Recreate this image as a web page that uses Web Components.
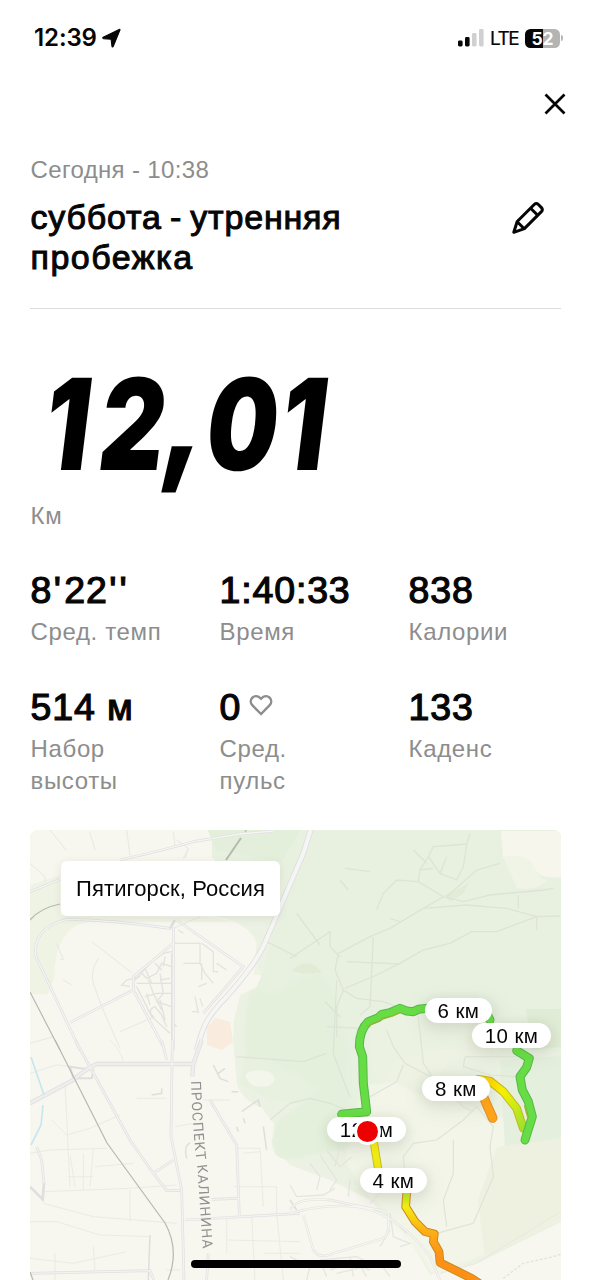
<!DOCTYPE html>
<html lang="ru">
<head>
<meta charset="utf-8">
<title>Пробежка</title>
<style>
html,body{margin:0;padding:0;background:#fff}
body{width:591px;height:1280px;overflow:hidden;font-family:"Liberation Sans",Arial,sans-serif;color:#060606}
</style>
</head>
<body>
<run-app></run-app>
<script>
const define = (name, html, setup) => customElements.define(name, class extends HTMLElement {
  constructor() {
    super();
    const t = document.createElement('template');
    t.innerHTML = html;
    this.attachShadow({mode: 'open'}).appendChild(t.content.cloneNode(true));
  }
  connectedCallback() { if (setup) setup(this, this.shadowRoot); }
});

define('status-bar', `
<style>
:host{display:flex;height:76px;box-sizing:border-box;padding:0 28px 0 34px;align-items:center;justify-content:space-between;font-family:Inter,sans-serif}
.l,.r{display:flex;align-items:center}
.time{font-size:24px;font-weight:600;letter-spacing:-.1px;line-height:30px}
.l svg{margin-left:5.5px;overflow:visible}
.lte{font-size:19px;letter-spacing:-1.5px;margin:1px 0 0 6px;width:35px;line-height:24px;-webkit-text-stroke:.2px #060606}
.bat{width:35px;height:19px;border-radius:5.5px;background:linear-gradient(90deg,#060606 51%,#b4b4b4 51%);color:#fff;font:700 17.5px/19.5px Inter,sans-serif;text-align:center;letter-spacing:-.2px}
.nub{width:2px;height:6px;border-radius:0 2px 2px 0;background:#b8b8b8;margin-left:1px}
</style>
<div class="l"><span class="time">12:39</span>
<svg width="19" height="19" viewBox="0 0 19 19"><path d="M18 .9 11.2 17.5Q10.6 18.6 10 17.4L9.1 10.2 1.4 9.6Q.1 9.1 1.2 8.3L17.2 .5Q18.3 .1 18 .9Z" fill="#060606" stroke="#060606" stroke-width="1.1" stroke-linejoin="round"/></svg></div>
<div class="r"><svg width="27" height="18" viewBox="0 0 27 18"><rect x="1" y="11.5" width="4.6" height="6" rx="1.4" fill="#060606"/><rect x="8" y="8" width="4.6" height="9.5" rx="1.4" fill="#060606"/><rect x="15" y="4" width="4.6" height="13.5" rx="1.4" fill="#d0d0d0"/><rect x="22" y="0" width="4.6" height="17.5" rx="1.4" fill="#d0d0d0"/></svg>
<span class="lte">LTE</span><span class="bat">52</span><span class="nub"></span></div>`);

define('close-button', `
<style>:host{display:flex;justify-content:flex-end;padding:17px 25px 0 0;height:59px;box-sizing:border-box}</style>
<svg width="22" height="22" viewBox="0 0 22 22"><path d="M1.5 1.5 20.5 20.5M20.5 1.5 1.5 20.5" stroke="#060606" stroke-width="2.7" fill="none"/></svg>`);

define('run-header', `
<style>
:host{display:block;margin:0 30px;height:174px;box-sizing:border-box;border-bottom:1px solid #dcdcdc;padding-top:21px}
.date{font-size:24px;line-height:28px;color:#8d8d8d;letter-spacing:.35px;padding-left:.5px}
.row{display:flex;justify-content:space-between;margin-top:14px}
h1{font-size:34px;line-height:40.4px;font-weight:400;margin:-1px 0 0;width:400px;letter-spacing:.8px;word-spacing:-2px;-webkit-text-stroke:1px #060606;padding-left:.5px}
svg{margin:3px 16px 0 0}
</style>
<div class="date"><slot name="date"></slot></div>
<div class="row"><h1><slot></slot></h1>
<svg width="34" height="34" viewBox="0 0 34 34" fill="none" stroke="#060606" stroke-width="3" stroke-linejoin="round"><path d="M2.8 31.3 6.2 20.5 23.2 3.5Q25.3 1.6 27.4 3.5L30.4 6.6Q32.2 8.7 30.4 10.6L13.4 27.6Z"/><path d="M19.6 7.2 26.7 14.3M6.2 20.7 13.2 27.7"/></svg></div>`);

define('distance-hero', `
<style>
:host{display:block;height:220px;margin:0 30px}
svg{display:block;padding-top:31px;overflow:visible}
.u{font-size:24px;line-height:28px;color:#8d8d8d;margin-top:-8px;letter-spacing:.8px;padding-left:.5px}
text{font-family:Inter,sans-serif;font-weight:900;font-size:127px}
.c{font-size:142px}
</style>
<svg width="340" height="170" viewBox="0 -20 340 170"><text transform="translate(18 110) skewX(-7) scale(.79 1)" x="-10 60 139 195 289" y="0">12<tspan class="c" dy="-7">,</tspan><tspan dy="7">01</tspan></text></svg>
<div class="u">Км</div>`);

define('stat-cell', `
<style>
:host{display:block;width:189px}
.v{font-size:37.5px;line-height:40px;height:40px;letter-spacing:.85px;-webkit-text-stroke:1.2px #060606;display:flex;align-items:center;padding-left:.5px}
.l{font-size:24px;line-height:32.4px;color:#8d8d8d;letter-spacing:.65px;margin-top:5.6px;white-space:pre-line;padding-left:.5px}
</style>
<div class="v"><slot></slot></div><div class="l"></div>`,
 (el, root) => { root.querySelector('.l').textContent = el.getAttribute('label').replace('|', '\n'); });

define('heart-icon', `
<style>:host{display:block;margin:-4px 0 0 7.5px}svg{display:block}</style>
<svg width="24" height="22" viewBox="0 0 24 22"><path d="M12 20 3.3 11.2C-1.4 5.8 5.8-1.8 12 4.8 18.2-1.8 25.4 5.8 20.7 11.2Z" fill="none" stroke="#8d8d8d" stroke-width="2.4"/></svg>`);

define('stat-grid', `
<style>:host{display:grid;grid-template-columns:repeat(3,189px);grid-template-rows:117px 143px;padding:41px 0 0 30px;height:301px;box-sizing:border-box}</style><slot></slot>`);

define('km-pin', `
<style>
:host{position:absolute;height:25px;border-radius:13px;background:#fff;display:block;text-align:center;font-size:20.5px;line-height:25px;letter-spacing:.4px;box-shadow:0 2px 12px rgba(60,60,40,.1)}
</style><slot></slot>`,
 el => { el.style.left = el.getAttribute('x') + 'px'; el.style.top = el.getAttribute('y') + 'px'; el.style.width = el.getAttribute('w') + 'px'; });

define('route-map', `
<style>
:host{display:block;position:relative;margin:0 30px;width:531px;height:450px;border-radius:8px 8px 0 0;overflow:hidden;background:#f7f7ef}
svg.m{display:block}
.place{position:absolute;left:31px;top:31px;width:219px;height:55px;border-radius:6px;background:#fff;box-shadow:0 2px 8px rgba(60,60,40,.1);text-align:center;font-size:22px;line-height:55px;letter-spacing:.1px}
.dot{position:absolute;left:326.5px;top:290.5px;width:21px;height:21px;border-radius:50%;background:#ec0000;box-shadow:0 0 0 3px #fff}
</style>
<svg class="m" width="531" height="450" viewBox="30 830 531 450">
<defs>
<linearGradient id="y1" x1="0" y1="0" x2="1" y2="1"><stop offset="0" stop-color="#ffc400"/><stop offset=".4" stop-color="#f7f000"/><stop offset="1" stop-color="#9be22c"/></linearGradient>
<linearGradient id="y2" gradientUnits="userSpaceOnUse" x1="0" y1="630" x2="0" y2="830"><stop offset="0" stop-color="#a7e32c"/><stop offset=".25" stop-color="#f2ec10"/><stop offset=".6" stop-color="#ffb014"/><stop offset="1" stop-color="#ff9016"/></linearGradient>
<filter id="soft"><feGaussianBlur stdDeviation="1.5"/></filter>
<filter id="wide"><feGaussianBlur stdDeviation="9"/></filter>
</defs>
<rect x="30" y="830" width="531" height="450" fill="#f7f7ef"/>
<path fill="#eff3e4" d="M30 885 60 875V916L180 917 212 917Q250 922 257 944L262 975 254 975 258 922 100 922Q70 920 60 945 54 960 54 978L48 994H30Z"/>
<path fill="#ecf2e3" d="M208 830 214 850 216 917Q250 922 257 944L255 960 264 984 240 995 234 1020 233 1040 237 1085Q243 1101 262 1108L275 1125 272 1145 290 1165 330 1180 370 1200 410 1240 430 1275 480 1262 561 1222V830Z"/>
<path fill="#e8f1e0" d="M212 830H561V1052L500 1050 440 1050 395 1060 375 1105 370 1145 340 1150 300 1157Q284 1163 275 1154L272 1140 280 1118 300 1104 270 1100 240 1085 245 1052 246 1010 264 970 285 880 250 860 212 858Z"/>
<path fill="#e3efdb" d="M208 830H300L282 862 216 850Z"/>
<g filter="url(#soft)"><path fill="#e3efdb" opacity=".75" d="M249 992Q260 985 270 995L320 970 335 995 350 1060 350 1110 340 1148 300 1158Q276 1162 273 1145L274 1125 300 1105 318 1090 280 1065 248 1056 243 1040Z"/>
<path fill="#f4f5e9" opacity=".75" d="M356 1110 365 1085 395 1082 420 1095 480 1108 505 1120 520 1145 561 1138V1218L482 1256 433 1275 420 1255 360 1185 345 1160Z"/>
<path fill="#eef2e4" d="M370 1040 372 1020 410 1007 500 1020 500 1055 450 1060 430 1090 400 1080 372 1080Z" opacity=".55"/></g>
<path fill="#eef1e0" d="M497 1147 561 1135V1218L485 1257 478 1200Z"/>
<path fill="#e1ecd6" d="M526 1009H561V1047L532 1050Z"/><path fill="#e5efde" d="M500 1060 561 1056V1138L505 1146Z"/><path fill="#e0ead2" d="M291 971Q308 955 322 972L305 974ZM445 895Q465 888 470 880L464 893 450 902Z" opacity=".8"/>
<path fill="#f6f6ec" d="M501 831H561V877Q540 880 534 868 528 852 503 858Z"/>
<path fill="#eff4e6" d="M503 857Q528 852 534 868 540 880 548 880 535 892 517 888Z"/>
<path fill="#f3f6eb" d="M245 1075Q252 1068 270 1072 280 1080 268 1086 250 1090 245 1075Z"/>
<path fill="#f9ebde" d="M207 1028 215 1018 230 1022 233 1042 222 1050 207 1045Z"/>
<g fill="#7a8a6a" opacity=".10" filter="url(#wide)"><rect x="420" y="1000" width="80" height="34" rx="15"/><rect x="470" y="1025" width="84" height="34" rx="15"/><rect x="420" y="1078" width="72" height="34" rx="15"/><rect x="330" y="1120" width="78" height="34" rx="15"/><rect x="360" y="1170" width="70" height="34" rx="15"/></g>
<g fill="none" stroke="#e3e3e1" stroke-width="1" opacity=".8">
<g transform="translate(30 820) scale(.33333)" stroke-width="3">
<path d="M60 30 110 92M178 35 196 90M290 30 300 105M430 35 436 85M0 130 45 170V185M475 85 460 115M185 365 305 458M270 635 375 590M0 670 70 650M430 325 510 290 530 260M205 415Q180 455 190 490L215 560 270 685M80 370 100 418 90 420M100 480 125 495M440 60 475 85 465 115"/>
<path stroke="#dedede" stroke-width="4" d="M435 370H510V430H460M515 370 550 395V455H565M510 430 525 460 550 490M515 430V480M495 530 505 580M510 535 518 560M485 575H505M505 500 530 490M560 430 590 450M445 330 460 340M430 610 440 620"/>
<path stroke="#dddddb" stroke-width="4" d="M315 480 360 430 400 400 425 395M320 490H425M320 500 365 590 420 640M425 400V660M335 460 350 475 380 460 395 430 425 440M345 530 380 520H425M355 480 370 520 395 570M390 460 400 520 380 545 425 560M370 590Q350 570 375 560L395 585 410 620M330 470 290 480 275 495 300 500M375 430 395 450M405 410 400 440M345 445 365 490M390 480 420 475M390 540 405 600M360 555 350 520"/>
</g>
<g transform="translate(30 1040) scale(.33333)" stroke-width="2.4">
<path d="M0 100 80 75 130 80M240 0Q270 30 280 62M105 130 120 440M65 240 110 285 180 265 270 225M0 340 60 330 230 325M120 345 135 440M160 340V450M190 330 180 440M115 410H190M195 380 310 370M300 450V545M40 455 300 445 440 435M0 545H80L210 585 360 590M40 490 190 530 440 550M0 655 130 670 290 635M75 640V720M190 620 195 690M410 690H450M435 260 490 250M520 180H600M320 175H410M620 325H690L700 500M640 340 690 335M590 530V640M665 525 675 720M740 520 760 720M590 600 810 605M700 640H810M610 440H740V520"/>
<path stroke="#d8d8d8" stroke-width="4.5" d="M360 585 355 720M365 165 395 160V145M470 355Q460 320 480 308M550 75 570 115 595 125M585 85 565 100M605 155H625M620 260 625 275M640 235 645 250M635 215 685 180 690 200M700 260 710 330M780 480 800 510"/>
</g>
<g transform="translate(290 980) scale(.33333)" stroke-width="4" stroke="#e2e2dc">
<path d="M60 550 90 590 80 630M110 510 150 560 185 530M90 525 140 600 120 630M150 500 135 560M0 615 20 650 100 645 135 625M180 600 175 650M240 670 270 640 345 590M0 830 60 860 50 900M90 840 200 830 260 860M90 840 110 890M140 880 270 850 300 890M180 830 190 890M300 700 310 770 360 790 330 800M310 720 350 760M300 750 270 800M120 870 180 850 240 870M200 840 230 890"/>
</g>
</g>
<g fill="none" stroke="#dbe1d4" stroke-width="1" opacity=".85">
<g transform="translate(290 820) scale(.33333)" stroke-width="4">
<path d="M0 415 120 335V380L150 410 M20 280 90 375M145 400 240 350 300 325 400 265 460 230 520 245 600 225 760 210 790 205M400 265 530 255 650 265 740 290 810 288M740 290V330M685 225V265M250 350 240 560 210 585M165 505 260 465 330 430 400 390 480 370 545 335 620 335 740 290M170 425 330 432M145 400 135 450 160 510 200 535 280 545 320 560M160 510 140 560V650M260 270 280 220 320 180 385 185 460 230M470 230 560 150 630 130M385 185 390 150 415 110 430 80 530 72 540 40M415 110 450 160 500 180 520 140 530 75M450 160 470 110M390 150 430 145M370 90 410 130M150 180 175 210M165 145 240 155M300 295 330 305M105 545 150 590M-80 360 20 410"/>
</g>
<g transform="translate(290 980) scale(.33333)" stroke-width="3.5">
<path d="M290 150 310 200 345 250 430 295 520 380 550 395M385 110 400 250 430 295M340 255 320 305 240 350M345 590 340 530 370 490 440 480 520 420 560 380 610 440 600 500 610 590 550 730 440 760M490 480 490 580 460 660 470 740M-60 420 0 370 60 355 120 370 190 400M-160 230 40 245 110 220 M140 0 130 220 160 300 180 350M110 140 210 145M525 230 520 260 600 285 680 290M525 230 680 230"/>
</g></g>
<g fill="none" stroke="#dedee0" transform="translate(30 820) scale(.33333)">
<g stroke-width="8"><path d="M0 215 90 178M270 120Q400 90 490 65L630 42 730 33"/><path d="M842 30 820 100 700 380Q670 440 590 530 530 590 515 640L500 690" stroke-width="17"/><path d="M430 320V690M430 370 310 470V510L120 608M310 510 400 680M440 300 640 440 520 580M110 298Q250 300 420 325L435 300M110 298Q5 325 18 410L150 690"/></g>
</g>
<g fill="none" stroke="#f5f5f4" transform="translate(30 820) scale(.33333)">
<path d="M842 30 820 100 700 380Q670 440 590 530 530 590 515 640L500 690" stroke-width="12"/><path d="M0 215 90 178M270 120Q400 90 490 65L630 42 730 33M430 320V690M430 370 310 470V510L120 608M310 510 400 680M440 300 640 440 520 580M110 298Q250 300 420 325M110 298Q5 325 18 410L150 690" stroke-width="4"/>
</g>
<g fill="none" stroke="#dfdfe0" transform="translate(30 1040) scale(.33333)" stroke-width="13">
<path d="M0 190 130 120Q170 85 200 72H490L515 0M490 68 487 110"/><path d="M135 0 185 90 300 300 370 400 410 452H450" stroke-width="8"/><path d="M427 0 423 290 455 450 462 720M395 0 410 60M370 400 430 360M540 180 620 315 628 525M465 540 810 520M545 478 625 475M0 700 360 692 372 720M0 440 38 478 42 430 35 360 20 320M535 640 530 720" stroke-width="8"/><path d="M120 80 190 90 185 115 130 115Z" stroke-width="6"/>
</g>
<g fill="none" stroke="#f3f3f1" transform="translate(30 1040) scale(.33333)" stroke-width="8">
<path d="M0 190 130 120Q170 85 200 72H490L515 0M490 68 487 110" stroke="#eeeeee"/><path d="M135 0 185 90 300 300 370 400 410 452H450M427 0 423 290 455 450 462 720M395 0 410 60M370 400 430 360M540 180 620 315 628 525M465 540 810 520M545 478 625 475M0 700 360 692 372 720M20 320 35 360 42 430M535 640 530 720" stroke-width="4"/>
</g>
<g fill="none" stroke="#e0e0df" transform="translate(290 980) scale(.33333)"><path d="M0 700Q130 665 230 685 340 720 420 830L450 900M0 690Q20 650 120 660L290 695M40 705 70 810Q90 840 130 820L280 775Q300 765 295 700" stroke-width="7"/><path d="M0 700Q130 665 230 685 340 720 420 830L450 900M0 690Q20 650 120 660L290 695M40 705 70 810Q90 840 130 820L280 775Q300 765 295 700" stroke="#f7f7f1" stroke-width="3.5"/><path d="M450 880 560 850 640 800 820 690" stroke-width="3" stroke="#e8e8e0"/><path d="M640 895 700 850 790 830 820 820" stroke-width="4" stroke-dasharray="8 6"/></g>
<g fill="none" stroke="#b8b8b2" stroke-width="1.2"><path d="M30 920Q40 908 60 904M30 992 60 1050M245 832 247 829"/><path d="M226 860 241 838" stroke-width="2"/><path d="M55 1040 107 1143 165 1223Q180 1250 168 1280M30 1272 33 1280"/></g>
<path d="M31 1057 44 1095M43 1105 41 1125 31 1145" fill="none" stroke="#c5e8ef" stroke-width="1.7"/>
<path id="street" d="M191 1081 Q192.500 1130 197.500 1170 L203 1252" fill="none"/>
<text font-family="Roboto,sans-serif" font-size="14" fill="#909090" stroke="#f7f7ef" stroke-width="1" paint-order="stroke"><textPath href="#street" textLength="168">ПРОСПЕКТ КАЛИНИНА</textPath></text>
<g transform="translate(290 980) scale(.33333)" fill="none" stroke-linecap="round" stroke-linejoin="round">
<path d="M565 298 600 303 640 335 680 385 700 445" stroke="#c3b51e" stroke-width="26"/><path d="M565 298 600 303 640 335 680 385 700 445" stroke="url(#y1)" stroke-width="20"/>
<path d="M412 85 385 88 370 95 350 93 330 85 300 98 275 103 265 113 235 125Q208 150 208 200L218 230 220 310 230 395 155 403M590 100 600 120M680 212 718 235 710 262 690 290 697 330 715 365 727 410 705 480" stroke="#59b64a" stroke-width="27"/>
<path d="M412 85 385 88 370 95 350 93 330 85 300 98 275 103 265 113 235 125Q208 150 208 200L218 230 220 310 230 395 155 403M590 100 600 120M680 212 718 235 710 262 690 290 697 330 715 365 727 410 705 480" stroke="#66dc45" stroke-width="21"/>
<path d="M232 138 275 118 310 107 330 98" stroke="#9fb42f" stroke-width="4"/>
<path d="M704 378 708 395 714 415" stroke="#a9b430" stroke-width="4"/>
<path d="M580 350 608 414" stroke="#dd8d26" stroke-width="29"/><path d="M580 350 608 414" stroke="#ffa31b" stroke-width="23"/>
<path d="M252 490 265 570" stroke="#c6bd2a" stroke-width="25"/><path d="M252 490 265 570" stroke="#f0ea14" stroke-width="19"/>
<path d="M350 640 347 680 375 725 405 755 433 762 430 785 447 815 450 848 500 873 545 895 575 915" stroke="#c58925" stroke-width="26"/><path d="M350 640 347 680 375 725 405 755 433 762 430 785 447 815 450 848 500 873 545 895 575 915" stroke="url(#y2)" stroke-width="20"/>
</g>
</svg>
<div class="place"><slot name="place"></slot></div>
<slot></slot>
<div class="dot"></div>`);

define('home-indicator', `<style>:host{display:block;position:absolute;left:190.5px;top:1260px;width:210.5px;height:8px;border-radius:4px;background:#000}</style>`);

define('run-app', `
<style>
:host{display:flex;flex-direction:column;position:relative;width:591px;height:1280px;background:#fff;overflow:hidden}:host>*{flex:none}
.w{letter-spacing:1.5px}.q{letter-spacing:3.2px;padding-left:1.6px}
</style>
<status-bar></status-bar>
<close-button></close-button>
<run-header><span slot="date">Сегодня - 10:38</span>суббота - утренняя <span class="w">пробежка</span></run-header>
<distance-hero></distance-hero>
<stat-grid>
<stat-cell label="Сред. темп"><span>8<span class="q">'</span>22<span class="q">''</span></span></stat-cell><stat-cell label="Время">1:40:33</stat-cell><stat-cell label="Калории">838</stat-cell>
<stat-cell label="Набор|высоты">514 м</stat-cell><stat-cell label="Сред.|пульс">0<heart-icon></heart-icon></stat-cell><stat-cell label="Каденс">133</stat-cell>
</stat-grid>
<route-map><span slot="place">Пятигорск, Россия</span>
<km-pin x="395" y="168" w="67">6 км</km-pin><km-pin x="442" y="193" w="79">10 км</km-pin><km-pin x="392" y="246" w="68">8 км</km-pin><km-pin x="297" y="287" w="79">12 км</km-pin><km-pin x="330" y="338" w="67">4 км</km-pin>
</route-map>
<home-indicator></home-indicator>`);
</script>
</body>
</html>
